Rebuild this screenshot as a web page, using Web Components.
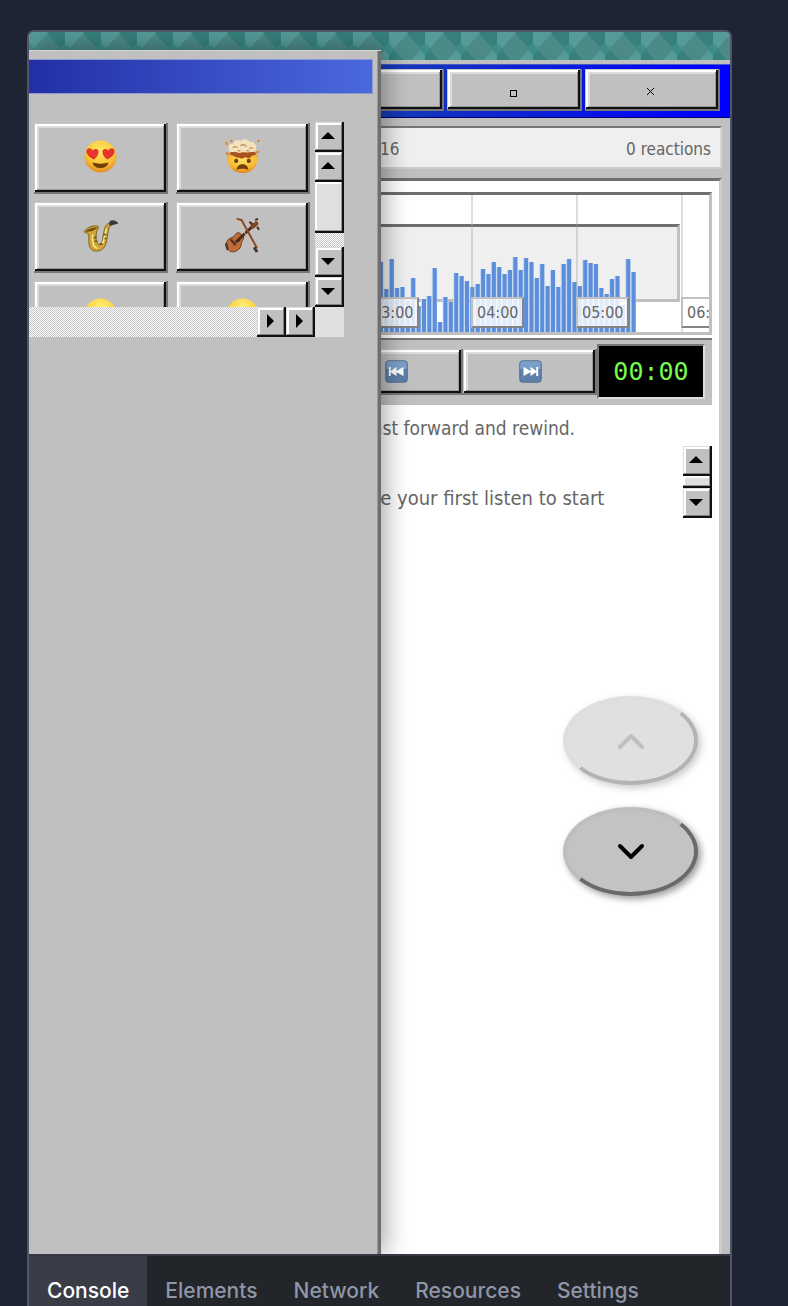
<!DOCTYPE html>
<html lang="en">
<head>
<meta charset="utf-8">
<title>Listening room</title>
<meta name="viewport" content="width=device-width, initial-scale=1">
<style>
  html, body { margin: 0; }
  body { background: #1e2433; font-family: "DejaVu Sans Condensed", "DejaVu Sans", "Noto Sans", sans-serif; }
</style>
</head>
<body>
<preview-frame>
  <app-window>
    <reaction-drawer slot="drawer"></reaction-drawer>
    <wave-timeline></wave-timeline>
    <media-player></media-player>
    <listen-feed></listen-feed>
  </app-window>
  <dev-tabs slot="footer"></dev-tabs>
</preview-frame>
<script>
const define = (name, html, setup) => {
  const tpl = document.createElement('template');
  tpl.innerHTML = '<style>:host,*,*::before,*::after{box-sizing:border-box}:host([hidden]){display:none}</style>' + html;
  customElements.define(name, class extends HTMLElement {
    constructor() {
      super();
      this.attachShadow({ mode: 'open' }).append(tpl.content.cloneNode(true));
    }
    connectedCallback() { if (setup) setup.call(this, this.shadowRoot); }
  });
};

const emoji = {
  love: `<defs><radialGradient id="g" cx=".5" cy=".3" r=".75"><stop offset="0" stop-color="#ffe668"/><stop offset=".6" stop-color="#fbc637"/><stop offset="1" stop-color="#dc801d"/></radialGradient></defs>
    <circle cx="18" cy="18" r="16.5" fill="url(#g)"/>
    <path d="M11 21C3 17 2 12 5 10c2-1 4 0 5 2 2-3 6-2 6 1 0 3-2 6-5 8zM25 21c-3-2-5-5-5-8 0-3 4-4 6-1 1-2 3-3 5-2 3 2 2 7-6 11z" fill="#e8332f"/>
    <path d="M10 24c4 2 12 2 16 0 0 8-16 8-16 0z" fill="#704008"/>`,
  mind: `<defs><radialGradient id="g" cx=".5" cy=".3" r=".75"><stop offset="0" stop-color="#ffe064"/><stop offset=".6" stop-color="#f9b934"/><stop offset="1" stop-color="#d8761c"/></radialGradient></defs>
    <path d="M2 17c3-2 5 2 8 0s5-1 8 0 6 2 8 0 6-1 8 0c0 11-6 18-16 18S2 28 2 17z" fill="url(#g)"/>
    <path d="M5 16c0-3 3-4 5-3 1-2 15-2 17 0 3-1 5 1 5 3-2 1-4 1-6 3-2 2-4-1-6 0-2 2-4 1-6 0-2 1-5-2-9-3z" fill="#a9531f"/>
    <path d="M4 11C2 7 6 4 8 5c1-4 6-5 8-3 2-3 8-2 9 1 4-1 8 2 7 6 1 4-4 5-6 4-4 2-7 0-9 1-4 1-5-1-7-1-3 1-6 0-6-2z" fill="#f4e2bd"/>
    <path d="M8 9c2-2 4-1 5 0m3-2c2-2 5-1 6 1m3 2c1-1 3-1 4 0M13 12h3m6 0h3" fill="none" stroke="#c7985f" stroke-width="1.5"/>
    <path d="M1 14l3 2M2 6L1 3M32 14l3-1M34 3l1-2M7 3l-1-2" stroke="#dc831c" stroke-width="2"/>
    <circle cx="11.5" cy="22.500" r="2.200" fill="#704008"/><circle cx="24.500" cy="22.500" r="2.200" fill="#704008"/>
    <path d="M12 32c0-8 12-8 12 0-3-2-9-2-12 0z" fill="#704008"/>`,
  sax: `<path d="M1 14c5-6 12-7 15-5l-2 5c-1 6-1 11 2 13 4 1 4-5 5-10 1-6 2-12 8-12l1 2c-4 1-4 7-5 12-1 8-3 15-11 15C5 34 6 25 6 18c0-3-3-2-5-4z" fill="#d0a63a" stroke="#826014"/>
    <path d="M2 14c4-3 8-5 13-4-4 3-8 5-13 4z" fill="#754f10"/>
    <path d="M10 17c-1 8 1 14 5 14M24 11c-1 5-2 12-4 15" fill="none" stroke="#f9ea96" stroke-width="1.500"/>
    <path d="M11 20h3m-2 4h3m2 3h3m1-10h3m-2 4h2" stroke="#6e5010" stroke-width="1.500"/>
    <path d="M27 5c0-3 5-4 9 0v1l-9 2z" fill="#38383a"/>`,
  violin: `<path d="M2 24c2-4 6-3 8-6 2-4 5-3 7-1s3 4 1 6c-2 2 0 7-5 10-4 3-8 2-10-1-3-2-2-5-1-8z" fill="#c26d37" stroke="#693414"/>
    <path d="M1 26l2 7M6 22l5 6m2-6l2 2" stroke="#4d3931" stroke-width="2.500"/>
    <path d="M11 25L29 8" stroke="#4b2a1a" stroke-width="3"/>
    <path d="M26 7c2-3 5-1 5-4 4 0 4 4 2 5s-3 4-6 3z" fill="#7e4728"/><path d="M25 4l3 2m5 3l2 3m-4-10l3-1" stroke="#4b2a1a" stroke-width="2"/>
    <path d="M12 1l5 1 16 29" fill="none" stroke="#874b26" stroke-width="2"/><path d="M13 2l17 31" stroke="#dfc198"/><path d="M30 30l3 5" stroke="#493028" stroke-width="3"/>`,
  smile: `<defs><radialGradient id="g" cx=".5" cy=".3" r=".75"><stop offset="0" stop-color="#fff27c"/><stop offset=".6" stop-color="#fbd03f"/><stop offset="1" stop-color="#dc8a1d"/></radialGradient></defs>
    <circle cx="18" cy="18" r="16.500" fill="url(#g)"/><path d="M8 14q3-5 6 0m8 0q3-5 6 0M10 22q8 9 16 0" fill="none" stroke="#704008" stroke-width="2"/>`,
  prev: `<rect x="1" y="1" width="34" height="34" rx="5" fill="#5d7fa8" stroke="#3f5d80"/><path d="M2 6a4 4 0 0 1 4-4h24a4 4 0 0 1 4 4v8H2z" fill="#7ba0c8"/>
    <path d="M6 11h3v6l9-6v6l11-6v14l-11-6v6l-9-6v6H6z" fill="#fff"/>`,
  next: `<rect x="1" y="1" width="34" height="34" rx="5" fill="#5d7fa8" stroke="#3f5d80"/><path d="M2 6a4 4 0 0 1 4-4h24a4 4 0 0 1 4 4v8H2z" fill="#7ba0c8"/>
    <path d="M30 11h-3v6l-9-6v6L7 11v14l11-6v6l9-6v6h3z" fill="#fff"/>`
};

define('emoji-icon', `<style>
  :host { display: block; width: 35px; height: 35px; }
  :host([size="small"]) { width: 23px; height: 23px; }
  svg { display: block; width: 100%; height: 100%; }
</style><svg viewBox="0 0 36 36" aria-hidden="true"></svg>`, function (root) {
  root.querySelector('svg').innerHTML = emoji[this.getAttribute('name')];
});

define('bevel-button', `<style>
  :host { display: block; width: 134px; flex: none; }
  button { display: flex; align-items: center; justify-content: center; width: 100%; height: 100%; margin: 0; padding: 0; border: 0;
    background: #c0c0c0; font: inherit; color: #000;
    box-shadow: inset -2px -2px #777, inset 1px 1px #c8c8c8, inset -4px -4px #101010, inset 3px 3px #fff, inset -5px -5px #999, inset 5px 5px #dcdcdc; }
</style><button type="button"><slot></slot></button>`, function (root) {
  root.querySelector('button').setAttribute('aria-label', this.getAttribute('label') || '');
});

define('arrow-button', `<style>
  :host { display: block; flex: none; width: 29px; height: 30px; }
  button { display: grid; place-items: center; width: 100%; height: 100%; padding: 0 3px 3px 0; border: 0; background: #c0c0c0;
    box-shadow: inset -2px -2px #101010, inset 1px 1px #dcdcdc, inset -3px -3px #808080, inset 3px 3px #fff; }
  svg { width: 14px; height: 14px; display: block; }
  :host([dir="down"]) svg { transform: rotate(180deg); }
  :host([dir="right"]) svg { transform: rotate(90deg); }
</style><button type="button"><svg viewBox="0 0 14 14" aria-hidden="true"><path d="M7 3l7 7H0z"/></svg></button>`, function (root) {
  root.querySelector('button').setAttribute('aria-label', 'Scroll ' + this.getAttribute('dir'));
});

define('preview-frame', `<style>
  :host { display: flex; height: 100vh; min-height: 600px; padding: 30px 56px 0 27px; }
  .frame { flex: 1; min-width: 0; display: flex; flex-direction: column; border: 2px solid #525567; border-bottom: 0; border-radius: 7px 7px 0 0; overflow: hidden; }
  ::slotted(app-window) { flex: 1; min-height: 0; }
</style><div class="frame"><slot></slot><slot name="footer"></slot></div>`);

define('dev-tabs', `<style>
  :host { display: block; flex: none; }
  nav { display: flex; height: 52px; background: #222529; border-top: 2px solid #343843; }
  button { border: 0; background: none; padding: 20px 18px 0; font: 500 21px/30px Inter, sans-serif; color: #8f96a8; }
  button[aria-selected=true] { background: #3a3c47; color: #fff; }
</style><nav role="tablist"><button role="tab" aria-selected="true">Console</button><button role="tab">Elements</button><button role="tab">Network</button><button role="tab">Resources</button><button role="tab">Settings</button></nav>`);

define('app-window', `<style>
  :host { position: relative; display: flex; flex-direction: column; background: #c0c0c0; overflow: hidden; --drawer: 352px; }
  .sky { display: block; flex: none; width: 100%; height: 28px; }
  .title { flex: none; display: flex; justify-content: flex-end; gap: 3px; height: 54px; margin-top: 4px; padding: 4px 10px 6px 0;
    background: linear-gradient(90deg, #2a4fa0, #163bb4 50%, #00f 97%); border-bottom: 1px solid #000070; border-top: 1px solid #4657c8; }
  .title bevel-button { width: 135px; }
  .status { flex: none; display: flex; align-items: center; justify-content: space-between; height: 43px; margin: 8px 8px 9px 0; padding: 2px 9px 0 calc(var(--drawer) - 1px);
    background: #efefef; border-top: 2px solid #777; border-bottom: 2px solid #ccc; border-right: 2px solid #d4d4d4; font-size: 17px; line-height: 24px; color: #666; }
  main { flex: 1; margin-right: 8px; padding: 11px 7px 0 0; background: #fff; border-top: 3px solid #6e6e6e; border-right: 3px solid #ccc; }
  svg.i { display: block; width: 11px; height: 11px; margin: 2px 4px 0 0; }
  svg.max { margin-top: 5px; }
</style>
<svg class="sky" aria-hidden="true"><defs><pattern id="t" width="36" height="36" patternUnits="userSpaceOnUse">
  <path fill="#559b98" d="M0 0h36v36H0z"/><path fill="#37807c" d="M18 0h18v17H24zM0 17h12l6 19H0z"/>
  <path fill="#4b8a87" d="M18 2l15 15-15 15L4 17z"/><path fill="#3d8d89" d="M0 11l6 6-6 6zM36 11l-6 6 6 6z"/></pattern></defs><rect width="100%" height="100%" fill="url(#t)"/></svg>
<header class="title">
  <bevel-button label="Minimize"></bevel-button>
  <bevel-button label="Maximize"><svg class="i max" viewBox="0 0 11 11"><path d="M3 3h6v6H3z" fill="none" stroke="#000" shape-rendering="crispEdges"/></svg></bevel-button>
  <bevel-button label="Close"><svg class="i" viewBox="0 0 11 11"><path d="M2 2l7 7M9 2L2 9" stroke="#000"/></svg></bevel-button>
</header>
<div class="status"><span>16</span><span>0 reactions</span></div>
<main><slot></slot></main>
<slot name="drawer"></slot>`);

define('wave-timeline', `<style>
  :host { position: relative; display: flex; justify-content: flex-end; height: 143px; border: 3px solid #c0c0c0; border-top-color: #6e6e6e; border-left: 0; background: #fff; overflow: hidden; }
  .range { flex: 1; height: 78px; margin: 29px 29px 0 0; background: #efefef; border: 3px solid #c0c0c0; border-top-color: #6e6e6e; }
  .wave { position: absolute; right: 73px; bottom: 0; width: 258px; height: 76px; }
  .ticks { position: absolute; inset: 0; display: flex; justify-content: flex-end; }
  .tick { flex: none; width: 105px; display: flex; align-items: flex-end; padding-bottom: 4px; border-left: 2px solid rgba(160,160,160,.35); }
  .tick:last-child { width: 28px; }
  time { flex: none; width: 53px; height: 31px; margin-left: -2px; padding-left: 4px; font-size: 16px; line-height: 28px; color: #666; background: rgba(255,255,255,.82);
    border: 2px solid #c0c0c0; border-right-color: #858585; border-bottom-color: #858585; }
</style>
<div class="range"></div>
<svg class="wave" viewBox="0 0 258 76" preserveAspectRatio="none" aria-hidden="true"></svg>
<div class="ticks"><div class="tick"><time>03:00</time></div><div class="tick"><time>04:00</time></div><div class="tick"><time>05:00</time></div><div class="tick"><time>06:</time></div></div>`, function (root) {
  const levels = [70,43,73,44,45,31,54,26,33,36,64,10,35,30,59,56,51,45,48,63,58,70,65,58,62,75,62,74,70,54,68,46,62,45,68,73,50,46,72,69,68,44,38,53,56,27,73,60];
  const step = 258 / levels.length;
  root.querySelector('.wave').innerHTML = levels.map((h, i) =>
    `<rect x="${i * step}" y="${76 - h}" width="${step}" height="${h}" fill="#c6d7f3"/><rect x="${i * step + 1}" y="${76 - h}" width="4" height="${h}" fill="#5b8fdb"/>`).join('');
});

define('media-player', `<style>
  :host { display: flex; align-items: center; justify-content: flex-end; height: 67px; margin-top: 3px; padding: 0 7px 2px 0; background: #c0c0c0; border-top: 2px solid #777; }
  bevel-button { height: 46px; }
  output { display: grid; place-items: center; width: 108px; height: 55px; background: #000; color: #76fb4c; border: 2px solid #777; border-right-color: #ddd; border-bottom-color: #ddd;
    font: 25px/30px "DejaVu Sans Mono", monospace; }
</style>
<bevel-button label="Rewind"><emoji-icon size="small" name="prev"></emoji-icon></bevel-button>
<bevel-button label="Fast forward"><emoji-icon size="small" name="next"></emoji-icon></bevel-button>
<output>00:00</output>`);

define('listen-feed', `<style>
  :host { display: block; color: #666; white-space: nowrap; }
  p { margin: 0; }
  .hint { padding: 8px 0 0 337px; font-size: 19px; line-height: 30px; }
  .row { display: flex; align-items: flex-end; justify-content: space-between; height: 72px; margin-top: 3px; padding-left: 315px; }
  .empty { padding-bottom: 4px; font-size: 20px; line-height: 32px; }
  .bar { display: flex; flex-direction: column; }
  .thumb { height: 12px; background: #dfdfdf; box-shadow: inset -2px -2px #101010, inset -3px -3px #999, inset 2px 2px #fff; }
  .nav { display: flex; flex-direction: column; align-items: flex-end; gap: 22px; margin-top: 178px; padding-right: 14px; }
  .nav button { display: grid; place-items: center; width: 135px; height: 89px; padding: 0; background: #c3c3c3; color: #000;
    border: 4px solid #bebebe; border-right-color: #6a6a6a; border-bottom-color: #6a6a6a; border-radius: 50%; box-shadow: 3px 3px 7px rgba(0,0,0,.4); }
  .nav button:disabled { opacity: .5; }
  svg { width: 28px; height: 18px; fill: none; stroke: currentColor; stroke-width: 4; stroke-linecap: round; stroke-linejoin: round; }
  button:disabled svg { color: #808080; }
</style>
<p class="hint">fast forward and rewind.</p>
<div class="row"><p class="empty">Make your first listen to start</p><div class="bar"><arrow-button dir="up"></arrow-button><div class="thumb"></div><arrow-button dir="down"></arrow-button></div></div>
<div class="nav"><button disabled aria-label="Previous"><svg viewBox="0 0 28 18"><path d="M3 15L14 4l11 11"/></svg></button>
<button aria-label="Next"><svg viewBox="0 0 28 18"><path d="M3 3l11 11L25 3"/></svg></button></div>`);

define('reaction-drawer', `<style>
  :host { position: absolute; top: 18px; bottom: 0; left: 0; width: 352px; background: #c0c0c0; border-top: 1px solid #d4d4d4;
    box-shadow: inset -3px 0 #6e6e6e, inset -4px 0 #999, 4px 0 24px rgba(0,0,0,.36); }
  .bar { height: 35px; margin: 8px 8px 28px 0; background: linear-gradient(90deg, #222fa7, #4a69dd); border: 1px solid #8d99cf; border-left: 0; }
  .view { display: grid; grid-template-columns: 286px 29px; grid-template-rows: 185px 30px; }
  .grid { display: grid; grid-template-columns: 134px 134px; grid-auto-rows: 71px; gap: 8px; padding: 1px 0 0 5px; overflow: hidden; }
  .grid emoji-icon { margin: 0 1px 5px 0; }
  .v, .h { display: flex; background: repeating-conic-gradient(#fff 0 25%, #c4c4c4 0 50%) 0 0 / 2px 2px; }
  .v { flex-direction: column; }
  .thumb { height: 51px; margin-bottom: auto; background: #dfdfdf; box-shadow: inset -2px -2px #101010, inset -3px -3px #999, inset 2px 2px #fff; }
  .h { justify-content: flex-end; }
  .corner { background: #dfdfdf; }
</style>
<div class="bar"></div>
<div class="view">
  <div class="grid">
    <bevel-button label="Love"><emoji-icon name="love"></emoji-icon></bevel-button>
    <bevel-button label="Mind blown"><emoji-icon name="mind"></emoji-icon></bevel-button>
    <bevel-button label="Saxophone"><emoji-icon name="sax"></emoji-icon></bevel-button>
    <bevel-button label="Violin"><emoji-icon name="violin"></emoji-icon></bevel-button>
    <bevel-button label="Smile"><emoji-icon name="smile"></emoji-icon></bevel-button>
    <bevel-button label="Grin"><emoji-icon name="smile"></emoji-icon></bevel-button>
  </div>
  <div class="v"><arrow-button dir="up"></arrow-button><arrow-button dir="up"></arrow-button><div class="thumb"></div><arrow-button dir="down"></arrow-button><arrow-button dir="down"></arrow-button></div>
  <div class="h"><arrow-button dir="right"></arrow-button><arrow-button dir="right"></arrow-button></div>
  <div class="corner"></div>
</div>`);
</script>
</body>
</html>
